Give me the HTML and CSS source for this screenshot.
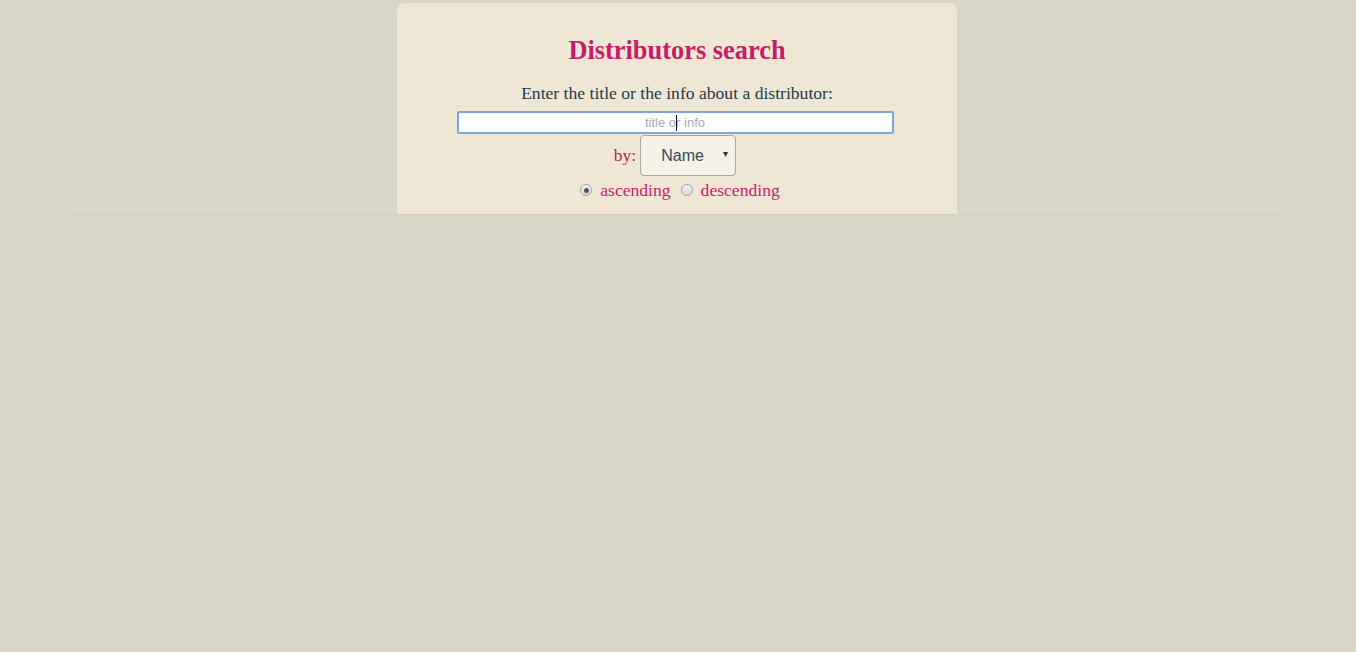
FILE: index.html
```html
<!DOCTYPE html>
<html>
<head>
<meta charset="utf-8">
<link rel="stylesheet" href="styles.css">
</head>
<body>
<div class="page">
  <div class="card">
    <h2 class="title">Distributors search</h2>
    <p class="prompt">Enter the title or the info about a distributor:</p>
    <div class="search-row">
      <div class="search-input"><span class="ph">title o</span><span class="caret"></span><span class="ph">r info</span></div>
    </div>
    <div class="by-row">
      <span class="by">by:</span>
      <div class="select"><span class="sel-text">Name</span><span class="arrow">&#9662;</span></div>
    </div>
    <div class="order-row">
      <span class="radio checked"></span><span class="opt">ascending</span>
      <span class="radio"></span><span class="opt">descending</span>
    </div>
  </div>
  <div class="rule"></div>
</div>
</body>
</html>
```

FILE: styles.css
```css
html, body {
  margin: 0;
  padding: 0;
  background: #dad6c5;
  height: 100%;
}
.page {
  padding-top: 3px;
  padding-right: 2px;
}
.card {
  width: 560px;
  margin: 0 auto;
  background: #efe7d4;
  border-radius: 8px 8px 0 0;
  padding: 33px 0 0;
  box-sizing: border-box;
  height: 211px;
  display: flex;
  flex-direction: column;
  align-items: center;
  font-family: "Liberation Serif", serif;
}
.title {
  margin: 0;
  font-size: 26.4px;
  line-height: 28px;
  font-weight: bold;
  color: #c61c6c;
}
.prompt {
  margin: 19px 0 0;
  font-size: 17.6px;
  line-height: 20px;
  color: #1e3a4a;
}
.search-row {
  margin: 8px 4px 0 0;
}
.search-input {
  width: 437px;
  height: 23px;
  box-sizing: border-box;
  border: 2px solid #7ea2e2;
  border-radius: 2px;
  background: #fff;
  display: flex;
  align-items: center;
  justify-content: center;
  font-family: "Liberation Sans", Arial, sans-serif;
  font-size: 13px;
  color: #a9a9a9;
}
.caret {
  display: inline-block;
  width: 1px;
  height: 16px;
  background: #000;
  margin: 0 -1px 0 0;
}
.by-row {
  margin: 1px 4px 0 0;
  display: flex;
  align-items: center;
  gap: 4px;
}
.by {
  font-size: 17.6px;
  color: #b8234c;
}
.select {
  width: 96px;
  height: 41px;
  box-sizing: border-box;
  border: 1px solid #aaa69a;
  border-radius: 4px;
  background: #f5f1e6;
  display: flex;
  align-items: center;
  position: relative;
  font-family: "Liberation Sans", Arial, sans-serif;
}
.sel-text {
  margin-left: 20px;
  font-size: 16px;
  color: #34495e;
}
.arrow {
  position: absolute;
  right: 7px;
  top: 12px;
  font-size: 10px;
  color: #333;
}
.order-row {
  margin: 3px 0 0 6px;
  display: flex;
  align-items: center;
  font-size: 17.6px;
  line-height: 22px;
  color: #c61c6c;
}
.radio {
  width: 12px;
  height: 12px;
  box-sizing: border-box;
  border-radius: 50%;
  border: 1px solid #a6a6a6;
  background: linear-gradient(#f2f2f2, #d8d8d8);
  margin: 0 8px 0 0;
  position: relative;
}
.radio.checked::after {
  content: "";
  position: absolute;
  left: 2.5px;
  top: 2.5px;
  width: 5px;
  height: 5px;
  border-radius: 50%;
  background: #555;
}
.opt {
  margin-right: 10px;
}
.opt:last-child {
  margin-right: 0;
}
.rule {
  margin: 0 71px 0 70px;
  border-top: 1px dotted #c9c5b8;
}
```
